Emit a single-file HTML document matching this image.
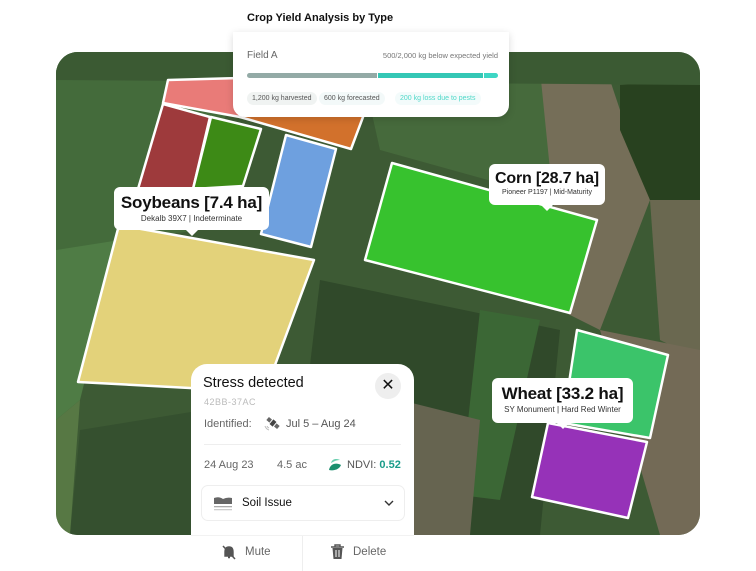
<!DOCTYPE html>
<html><head><meta charset="utf-8"><style>
*{margin:0;padding:0;box-sizing:border-box}
body{width:756px;height:571px;background:#fff;position:relative;overflow:hidden;font-family:"Liberation Sans",sans-serif}
.map{position:absolute;left:56px;top:52px;width:644px;height:483px;border-radius:22px;overflow:hidden}
.lbl{position:absolute;background:#fff;border-radius:6px;text-align:center;color:#111}
.lbl b{display:block;font-size:16px;font-weight:bold;letter-spacing:-0.2px}
.lbl span{display:block;font-size:8px;color:#333;margin-top:1px}
.lbl:after{content:"";position:absolute;bottom:-6px;left:50%;margin-left:-6px;border-left:6px solid transparent;border-right:6px solid transparent;border-top:6px solid #fff}
.top{position:absolute;left:233px;top:32px;width:276px;height:85px;background:#fff;border-radius:0 0 12px 12px;box-shadow:0 2px 8px rgba(0,0,0,.15)}
.chip{position:absolute;height:13px;font-size:7px;line-height:13px;padding:0 5px;border-radius:7px}
.card{position:absolute;left:191px;top:364px;width:223px;height:207px;background:#fff;border-radius:16px 16px 0 0}
</style></head><body>
<div style="position:absolute;left:247px;top:12px;font-size:11px;color:#111;font-weight:bold">Crop Yield Analysis by Type</div>
<div class="map"><svg width="644" height="483" viewBox="56 52 644 483">
<rect x="56" y="52" width="644" height="483" fill="#3d5a34"/>
<polygon points="56,52 240,52 200,230 56,250" fill="#446b3b"/>
<polygon points="56,250 120,240 80,400 56,420" fill="#4f7c45"/>
<polygon points="56,420 80,400 70,535 56,535" fill="#577844"/>
<polygon points="80,430 265,400 240,535 70,535" fill="#35502f"/>
<polygon points="360,60 540,60 560,200 380,150" fill="#466a3c"/>
<polygon points="540,70 610,80 650,200 600,330 560,310 555,220" fill="#756e58"/>
<polygon points="620,85 700,80 700,200 650,200 620,130" fill="#28411f"/>
<polygon points="650,200 700,200 700,360 660,340" fill="#6a6850"/>
<polygon points="600,330 700,350 700,535 660,535" fill="#736a56"/>
<polygon points="320,280 560,330 540,535 290,535" fill="#30492a"/>
<polygon points="480,310 540,320 500,500 460,495" fill="#3b6735"/>
<polygon points="400,400 480,420 470,535 380,535" fill="#666450"/>
<polygon points="56,52 700,52 700,85 56,80" fill="#3b5a33"/>
<g stroke="#fff" stroke-width="2.5" stroke-linejoin="round">
<polygon points="168,80 240,78 240,117 163,103" fill="#e97b78"/>
<polygon points="240,100 363,100 363,117 351,149 240,117" fill="#d2712c"/>
<polygon points="163,104 210,117 193,189 138,189" fill="#9e3a3c"/>
<polygon points="211,117 261,129 243,186 193,189" fill="#3d8a16"/>
<polygon points="286,135 336,149 311,247 261,234" fill="#6ea0df"/>
<polygon points="119,225 314,260 265,392 78,382" fill="#e3d27a"/>
<polygon points="392,163 597,220 570,313 365,260" fill="#37c22e"/>
<polygon points="577,330 668,355 650,438 563,423" fill="#3bc46a"/>
<polygon points="548,423 647,442 628,518 532,497" fill="#9632b8"/>
</g>
</svg>
</div>
<div class="lbl" style="left:114px;top:187px;width:155px;height:43px;padding-top:6px"><b style="font-size:17px">Soybeans [7.4 ha]</b><span>Dekalb 39X7 | Indeterminate</span></div>
<div class="lbl" style="left:489px;top:164px;width:116px;height:41px;padding-top:6px"><b>Corn [28.7 ha]</b><span style="font-size:7px">Pioneer P1197 | Mid-Maturity</span></div>
<div class="lbl" style="left:492px;top:378px;width:141px;height:45px;padding-top:6px"><b style="font-size:17px">Wheat [33.2 ha]</b><span>SY Monument | Hard Red Winter</span></div>
<div class="top">
<div style="position:absolute;left:14px;top:18px;font-size:10px;color:#666">Field A</div>
<div style="position:absolute;right:11px;top:19px;font-size:7.5px;color:#777">500/2,000 kg below expected yield</div>
<div style="position:absolute;left:14px;top:41px;width:130px;height:5px;background:#93aaa6;border-radius:3px 0 0 3px"></div>
<div style="position:absolute;left:145px;top:41px;width:105px;height:5px;background:#34c7b5"></div>
<div style="position:absolute;left:251px;top:41px;width:14px;height:5px;background:#3ed6c4;border-radius:0 3px 3px 0"></div>
<div class="chip" style="left:14px;top:60px;background:#f0f3f2;color:#555">1,200 kg harvested</div>
<div class="chip" style="left:86px;top:60px;background:#f3f9f9;color:#555">600 kg forecasted</div>
<div class="chip" style="left:162px;top:60px;background:#f3fbfb;color:#4fd8c8">200 kg loss due to pests</div>
</div>
<div class="card">
<div style="position:absolute;left:12px;top:11px;font-size:14.5px;color:#111">Stress detected</div>
<div style="position:absolute;right:13px;top:9px;width:26px;height:26px;border-radius:13px;background:#eee;text-align:center;line-height:25px;font-size:16px;color:#111">✕</div>
<div style="position:absolute;left:13px;top:33px;font-size:9px;color:#bbb;letter-spacing:.5px">42BB-37AC</div>
<div style="position:absolute;left:13px;top:54px;font-size:11px;color:#666">Identified:</div>
<svg style="position:absolute;left:72px;top:52px" width="18" height="16" viewBox="0 0 18 16"><g transform="rotate(40 10 7)"><rect x="3" y="5" width="4" height="4" fill="#666"/><rect x="8" y="4" width="4" height="6" fill="#444"/><rect x="13" y="5" width="4" height="4" fill="#666"/></g><path d="M2 10 q1 3 4 4 M4 10 q0.5 1.5 2 2" stroke="#bbb" fill="none"/></svg>
<div style="position:absolute;left:95px;top:54px;font-size:11px;color:#555">Jul 5 – Aug 24</div>
<div style="position:absolute;left:13px;top:80px;width:197px;height:1px;background:#eee"></div>
<div style="position:absolute;left:13px;top:95px;font-size:11px;color:#666">24 Aug 23</div>
<div style="position:absolute;left:86px;top:95px;font-size:11px;color:#666">4.5 ac</div>
<svg style="position:absolute;left:137px;top:93px" width="14" height="14" viewBox="0 0 14 14"><path d="M1 13 C2 7 8 5 13 8 C11 13 5 14 1 13Z" fill="#1a8f6e"/><path d="M3 6 C4 2 8 1 12 3 C8 3 5 5 3 6Z" fill="#6ccfb0"/></svg>
<div style="position:absolute;left:156px;top:95px;font-size:11px;color:#555">NDVI: <b style="color:#1a9c8a">0.52</b></div>
<div style="position:absolute;left:10px;top:121px;width:204px;height:36px;border:1px solid #eee;border-radius:7px">
<svg style="position:absolute;left:12px;top:11px" width="18" height="14" viewBox="0 0 18 14"><path d="M0 1 Q5 -1 9 2 Q13 0 18 1 V7 H0Z" fill="#666"/><rect y="9" width="18" height="1.3" fill="#aaa"/><rect y="12" width="18" height="1.3" fill="#ccc"/></svg>
<div style="position:absolute;left:40px;top:11px;font-size:11.5px;color:#111">Soil Issue</div>
<svg style="position:absolute;right:10px;top:14px" width="10" height="7" viewBox="0 0 10 7"><path d="M1 1 L5 5 L9 1" stroke="#333" stroke-width="1.4" fill="none"/></svg>
</div>
<div style="position:absolute;left:0;top:171px;width:223px;height:1px;background:#f2f2f2"></div>
<div style="position:absolute;left:111px;top:172px;width:1px;height:35px;background:#eee"></div>
<svg style="position:absolute;left:31px;top:181px" width="14" height="15" viewBox="0 0 14 15"><path d="M3 11 V7 Q3 2 7 2 Q11 2 11 7 V11 H3Z M6 12.5 h2" stroke="#555" stroke-width="1.4" fill="#555"/><path d="M1 1 L13 14" stroke="#555" stroke-width="1.5"/></svg>
<div style="position:absolute;left:54px;top:182px;font-size:11.5px;color:#666">Mute</div>
<svg style="position:absolute;left:140px;top:180px" width="13" height="15" viewBox="0 0 13 15"><path d="M0 3 H13 M4 3 V1 H9 V3" stroke="#555" stroke-width="1.4" fill="none"/><path d="M1.5 4 H11.5 L10.5 15 H2.5Z" fill="#555"/><path d="M5 6 V13 M8 6 V13" stroke="#fff" stroke-width="1"/></svg>
<div style="position:absolute;left:162px;top:182px;font-size:11.5px;color:#666">Delete</div>
</div>
</body></html>
